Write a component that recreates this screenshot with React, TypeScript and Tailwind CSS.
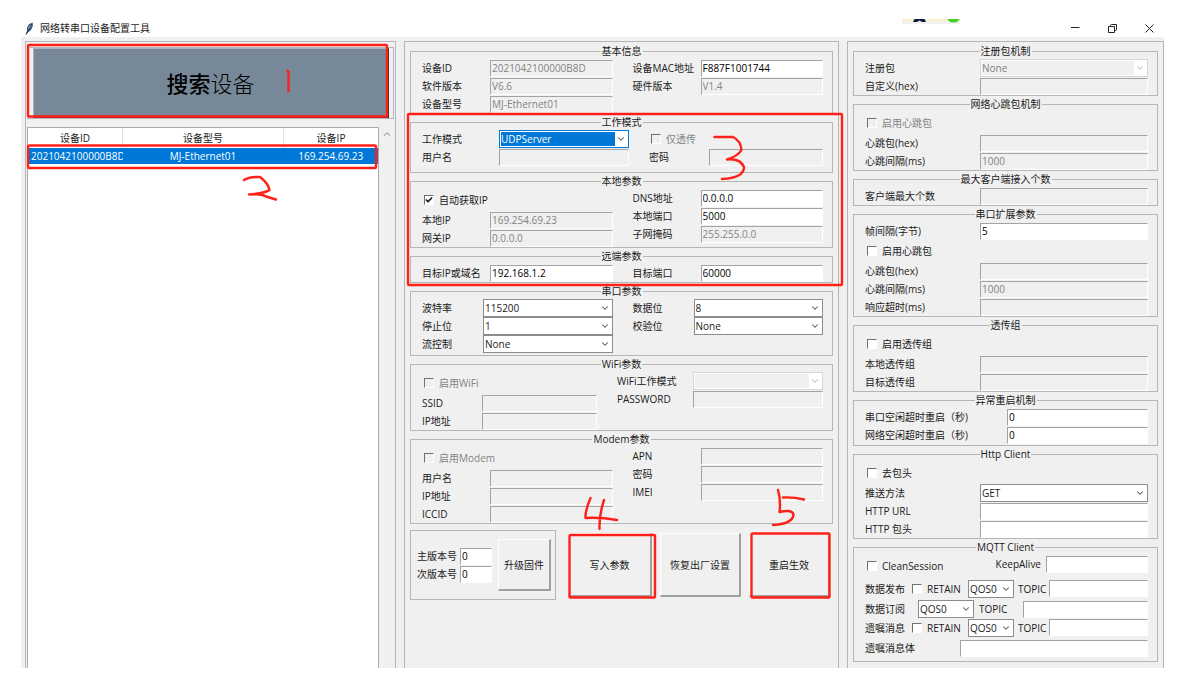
import { ReactNode, useState } from "react";
import { Check, ChevronDown, ChevronUp } from "lucide-react";
import clsx from "clsx";

const sunken = "border border-t-[#a3a3a3] border-l-[#a3a3a3] border-r-white border-b-white";
const raised =
  "bg-[#f0f0f0] border-t border-l border-r-2 border-b-2 border-t-white border-l-white border-r-[#a0a0a0] border-b-[#a0a0a0]";

function Group({ title, className, children }: { title: string; className?: string; children: ReactNode }) {
  return (
    <fieldset className="min-w-0 border border-[#b6b6b6]">
      <legend className="mx-auto px-px leading-4 whitespace-nowrap">{title}</legend>
      <div className={clsx("pl-[11px] pr-[9px]", className)}>{children}</div>
    </fieldset>
  );
}

interface TextBoxProps {
  value?: string;
  disabled?: boolean;
  className?: string;
  label?: string;
}

function TextBox({ value = "", disabled, className = "w-0 flex-1", label }: TextBoxProps) {
  return (
    <input
      type="text"
      defaultValue={value}
      disabled={disabled}
      aria-label={label}
      className={clsx(
        "h-[17px] min-w-0 px-px leading-4 outline-none",
        sunken,
        disabled ? "bg-[#f0f0f0] text-[#838383]" : "bg-white text-black",
        className
      )}
    />
  );
}

interface ComboProps {
  options?: string[];
  disabled?: boolean;
  active?: boolean;
  className?: string;
  label?: string;
}

function Combo({ options = [""], disabled, active, className = "flex-1", label }: ComboProps) {
  return (
    <span
      className={clsx(
        "relative flex h-[18px] min-w-0 border bg-white p-px",
        disabled ? "border-[#d6d6d6]" : active ? "border-[#0078d7]" : "border-[#8c8c8c]",
        className
      )}
    >
      <select
        disabled={disabled}
        aria-label={label}
        className={clsx(
          "mr-3 w-0 min-w-0 flex-1 appearance-none leading-3 outline-none",
          disabled && "bg-[#f0f0f0] text-[#838383] opacity-100",
          active && "bg-[#0078d7] text-white"
        )}
      >
        {options.map((o) => (
          <option key={o}>{o}</option>
        ))}
      </select>
      <ChevronDown
        className={clsx(
          "pointer-events-none absolute top-[3px] right-0.5 size-2.5",
          disabled ? "text-[#bdbdbd]" : "text-[#555]"
        )}
        strokeWidth={2.5}
      />
    </span>
  );
}

interface FieldProps {
  label: string;
  labelWidth?: string;
  children: ReactNode;
}

function Field({ label, labelWidth = "w-[68px]", children }: FieldProps) {
  return (
    <label className="flex h-[18px] min-w-0 items-center">
      <span className={clsx("shrink-0 whitespace-nowrap", labelWidth)}>{label}</span>
      {children}
    </label>
  );
}

interface TickProps {
  label: string;
  checked?: boolean;
  disabled?: boolean;
  className?: string;
}

function Tick({ label, checked = false, disabled, className = "h-[22px]" }: TickProps) {
  const [on, setOn] = useState(checked);
  return (
    <label className={clsx("flex items-center gap-[5px] pl-0.5 whitespace-nowrap", disabled && "text-[#838383]", className)}>
      <span className="relative flex">
        <input
          type="checkbox"
          checked={on}
          disabled={disabled}
          onChange={(e) => setOn(e.target.checked)}
          className={clsx(
            "size-[10px] appearance-none border border-t-[#707070] border-l-[#707070] border-r-white border-b-white",
            disabled ? "bg-[#f0f0f0]" : "bg-white"
          )}
        />
        {on && <Check className="pointer-events-none absolute inset-px size-2" strokeWidth={5} />}
      </span>
      {label}
    </label>
  );
}

function TitleBar() {
  return (
    <header className="flex h-[18px] items-center justify-between pr-2.5 pl-1">
      <div className="flex items-center gap-1.5">
        <svg viewBox="0 0 9 13" className="h-[13px] w-[9px]">
          <path d="M1 12.5 2.2 8.5 2 5.5 4 2.2 7.6.5 7.8 4 6.4 7.3 3.6 10Z" fill="#2c4668" />
          <path d="M3 8 3.4 5 6.6 1.6 6.2 5.2Z" fill="#8fb9e3" />
          <path d="M.8 12.8 6.8 2" stroke="#14202f" strokeWidth=".7" />
        </svg>
        <h1>网络转串口设备配置工具</h1>
      </div>
      <div className="flex items-center gap-7">
        <button aria-label="最小化" className="size-[9px]">
          <svg viewBox="0 0 9 9" className="size-[9px]" stroke="#222" fill="none">
            <path d="M0 3.5H8.5" />
          </svg>
        </button>
        <button aria-label="还原" className="size-[9px]">
          <svg viewBox="0 0 9 9" className="size-[9px]" stroke="#222" fill="none">
            <path d="M.5 2.5H6.5V8.5H.5ZM2.5 2.5V1.5Q2.5.5 3.5.5H8.5V5.5Q8.5 6.5 7.5 6.5H6.5" />
          </svg>
        </button>
        <button aria-label="关闭" className="size-[9px]">
          <svg viewBox="0 0 9 9" className="size-[9px]" stroke="#222" fill="none">
            <path d="M.5.5 8.5 8.5M8.5.5.5 8.5" />
          </svg>
        </button>
      </div>
    </header>
  );
}

function DevicePanel() {
  return (
    <section className="flex min-w-0 flex-col border border-b-0 border-[#b6b6b6] px-px pt-[5px]">
      <div className="border border-[#b6b6b6] pr-1 pl-[5px]">
        <button className="flex h-[70px] w-full items-center justify-center border-t border-r-2 border-b-2 border-l border-t-[#a9b4bf] border-r-[#333] border-b-[#333] border-l-[#a9b4bf] bg-[#778899] text-[22px] text-black">
          <span className="font-medium">搜索</span>
          <span className="font-light">设备</span>
        </button>
      </div>
      <div className="mt-2 flex flex-1">
        <div className="flex-1 border border-b-0 border-[#a5abb5] bg-white">
          <table className="w-full table-fixed">
            <colgroup>
              <col className="w-[27%]" />
              <col className="w-[46%]" />
              <col className="w-[27%]" />
            </colgroup>
            <thead>
              <tr className="h-5">
                <th className="border-r border-[#e2e2e2] font-normal">设备ID</th>
                <th className="border-r border-[#e2e2e2] font-normal">设备型号</th>
                <th className="font-normal">设备IP</th>
              </tr>
            </thead>
            <tbody>
              <tr className="h-4 bg-[#0078d7] text-center leading-4 text-white">
                <td className="overflow-hidden pl-[3px] text-left whitespace-nowrap">2021042100000B8D</td>
                <td>MJ-Ethernet01</td>
                <td>169.254.69.23</td>
              </tr>
            </tbody>
          </table>
        </div>
        <div className="flex w-[15px] justify-center pt-0.5">
          <ChevronUp className="size-2.5 text-[#b0b0b0]" strokeWidth={3} />
        </div>
      </div>
    </section>
  );
}

const twoCols = "grid grid-cols-2 gap-x-5";

function SettingsPanel() {
  return (
    <section className="min-w-0 border border-b-0 border-[#b6b6b6] px-[5px] pt-px">
      <Group title="基本信息" className={twoCols}>
        <div>
          <Field label="设备ID"><TextBox value="2021042100000B8D" disabled /></Field>
          <Field label="软件版本"><TextBox value="V6.6" disabled /></Field>
          <Field label="设备型号"><TextBox value="MJ-Ethernet01" disabled /></Field>
        </div>
        <div>
          <Field label="设备MAC地址"><TextBox value="F887F1001744" /></Field>
          <Field label="硬件版本"><TextBox value="V1.4" disabled /></Field>
        </div>
      </Group>

      <Group title="工作模式" className="grid grid-cols-[207fr_174fr] gap-x-5 pb-1.5">
        <div className="min-w-0">
          <Field label="工作模式" labelWidth="w-[77px]">
            <Combo options={["UDPServer", "UDPClient", "TCPServer", "TCPClient"]} active />
          </Field>
          <Field label="用户名" labelWidth="w-[77px]"><TextBox disabled /></Field>
        </div>
        <div className="min-w-0">
          <Tick label="仅透传" disabled className="h-[18px]" />
          <Field label="密码" labelWidth="w-[60px]"><TextBox disabled /></Field>
        </div>
      </Group>

      <Group title="本地参数" className={twoCols}>
        <div>
          <Tick label="自动获取IP" checked />
          <Field label="本地IP"><TextBox value="169.254.69.23" disabled /></Field>
          <Field label="网关IP"><TextBox value="0.0.0.0" disabled /></Field>
        </div>
        <div>
          <Field label="DNS地址"><TextBox value="0.0.0.0" /></Field>
          <Field label="本地端口"><TextBox value="5000" /></Field>
          <Field label="子网掩码"><TextBox value="255.255.0.0" disabled /></Field>
        </div>
      </Group>

      <Group title="远端参数" className={twoCols}>
        <Field label="目标IP或域名"><TextBox value="192.168.1.2" /></Field>
        <Field label="目标端口"><TextBox value="60000" /></Field>
      </Group>

      <Group title="串口参数" className={clsx(twoCols, "pb-0.5")}>
        <div>
          <Field label="波特率" labelWidth="w-[61px]"><Combo options={["115200", "57600", "9600"]} /></Field>
          <Field label="停止位" labelWidth="w-[61px]"><Combo options={["1", "2"]} /></Field>
          <Field label="流控制" labelWidth="w-[61px]"><Combo options={["None", "RTS/CTS"]} /></Field>
        </div>
        <div>
          <Field label="数据位" labelWidth="w-[61px]"><Combo options={["8", "7"]} /></Field>
          <Field label="校验位" labelWidth="w-[61px]"><Combo options={["None", "Odd", "Even"]} /></Field>
        </div>
      </Group>

      <Group title="WiFi参数" className="grid grid-cols-[175fr_206fr] gap-x-5">
        <div className="min-w-0">
          <Tick label="启用WiFi" disabled />
          <Field label="SSID" labelWidth="w-[60px]"><TextBox disabled /></Field>
          <Field label="IP地址" labelWidth="w-[60px]"><TextBox disabled /></Field>
        </div>
        <div className="min-w-0">
          <Field label="WiFi工作模式" labelWidth="w-[76px]"><Combo disabled /></Field>
          <Field label="PASSWORD" labelWidth="w-[76px]"><TextBox disabled /></Field>
        </div>
      </Group>

      <Group title="Modem参数" className={twoCols}>
        <div>
          <Tick label="启用Modem" disabled />
          <Field label="用户名"><TextBox disabled /></Field>
          <Field label="IP地址"><TextBox disabled /></Field>
          <Field label="ICCID"><TextBox disabled /></Field>
        </div>
        <div>
          <Field label="APN"><TextBox disabled /></Field>
          <Field label="密码"><TextBox disabled /></Field>
          <Field label="IMEI"><TextBox disabled /></Field>
        </div>
      </Group>

      <div className="mt-1.5 flex gap-2 pr-[3px]">
        <div className="mr-1 flex flex-[134] items-center justify-between border border-[#b6b6b6] py-2 pr-1 pl-1.5">
          <div>
            <Field label="主版本号" labelWidth="w-[43px]"><TextBox value="0" className="w-8" /></Field>
            <Field label="次版本号" labelWidth="w-[43px]"><TextBox value="0" className="w-8" /></Field>
          </div>
          <button className={clsx("h-[52px] w-[53px]", raised)}>升级固件</button>
        </div>
        <div className="flex flex-[262] gap-2 pt-[3px] pb-0.5">
          <button className={clsx("h-16 flex-[84]", raised)}>写入参数</button>
          <button className={clsx("h-16 flex-[81]", raised)}>恢复出厂设置</button>
          <button className={clsx("h-16 flex-[81]", raised)}>重启生效</button>
        </div>
      </div>
    </section>
  );
}

const wide = "w-[115px]";
const qos = ["QOS0", "QOS1", "QOS2"];

function PublishRow({ label }: { label: string }) {
  return (
    <div className="flex h-[19px] items-center">
      <span className="w-[45px] shrink-0">{label}</span>
      <Tick label="RETAIN" className="w-[58px] shrink-0" />
      <Combo options={qos} label={`${label} QOS`} className="w-[46px] shrink-0" />
      <label className="flex min-w-0 flex-1 items-center gap-[3px] pl-1">
        TOPIC
        <TextBox />
      </label>
    </div>
  );
}

function ExtraPanel() {
  return (
    <section className="min-w-0 border border-b-0 border-[#b6b6b6] px-[5px] pt-px">
      <Group title="注册包机制">
        <Field label="注册包" labelWidth={wide}><Combo options={["None"]} disabled /></Field>
        <Field label="自定义(hex)" labelWidth={wide}><TextBox disabled /></Field>
      </Group>

      <Group title="网络心跳包机制">
        <Tick label="启用心跳包" disabled />
        <Field label="心跳包(hex)" labelWidth={wide}><TextBox disabled /></Field>
        <Field label="心跳间隔(ms)" labelWidth={wide}><TextBox value="1000" disabled /></Field>
      </Group>

      <Group title="最大客户端接入个数">
        <Field label="客户端最大个数" labelWidth={wide}><TextBox disabled /></Field>
      </Group>

      <Group title="串口扩展参数">
        <Field label="帧间隔(字节)" labelWidth={wide}><TextBox value="5" /></Field>
        <Tick label="启用心跳包" />
        <Field label="心跳包(hex)" labelWidth={wide}><TextBox disabled /></Field>
        <Field label="心跳间隔(ms)" labelWidth={wide}><TextBox value="1000" disabled /></Field>
        <Field label="响应超时(ms)" labelWidth={wide}><TextBox disabled /></Field>
      </Group>

      <Group title="透传组">
        <Tick label="启用透传组" />
        <Field label="本地透传组" labelWidth={wide}><TextBox disabled /></Field>
        <Field label="目标透传组" labelWidth={wide}><TextBox disabled /></Field>
      </Group>

      <Group title="异常重启机制" className="pb-px">
        <Field label="串口空闲超时重启（秒)" labelWidth="w-[142px]"><TextBox value="0" /></Field>
        <Field label="网络空闲超时重启（秒)" labelWidth="w-[142px]"><TextBox value="0" /></Field>
      </Group>

      <Group title="Http Client">
        <Tick label="去包头" />
        <Field label="推送方法" labelWidth={wide}><Combo options={["GET", "POST"]} /></Field>
        <Field label="HTTP URL" labelWidth={wide}><TextBox /></Field>
        <Field label="HTTP 包头" labelWidth={wide}><TextBox /></Field>
      </Group>

      <Group title="MQTT Client" className="pb-1">
        <div className="mb-0.5 flex h-[22px] justify-between">
          <Tick label="CleanSession" />
          <label className="flex h-[18px] items-center gap-[5px]">
            KeepAlive
            <TextBox className="w-[102px]" />
          </label>
        </div>
        <PublishRow label="数据发布" />
        <div className="mt-0.5 flex h-[18px] items-center">
          <span className="w-[53px] shrink-0">数据订阅</span>
          <Combo options={qos} label="数据订阅 QOS" className="w-14 shrink-0" />
          <label className="flex min-w-0 flex-1 items-center gap-4 pl-[5px]">
            TOPIC
            <TextBox />
          </label>
        </div>
        <PublishRow label="遗嘱消息" />
        <div className="pt-0.5">
          <Field label="遗嘱消息体" labelWidth="w-[95px]"><TextBox /></Field>
        </div>
      </Group>
    </section>
  );
}

/* Red pen marks that number the steps, plus the clipped toolbar above the title bar. */
function Marks() {
  return (
    <svg
      viewBox="0 0 1194 673"
      preserveAspectRatio="none"
      className="pointer-events-none absolute inset-0 h-full w-full"
      fill="none"
      stroke="#ff2117"
      strokeWidth="2.4"
      strokeLinecap="round"
      strokeLinejoin="round"
    >
      <g stroke="none">
        <path d="M902 19H960V21.5H902Z" fill="#f7efcf" />
        <path d="M902 22H960V24H902Z" fill="#f1f1f1" />
        <path d="M913 22 914.5 19H924.5L926 22H922L919.5 20.5 917 22Z" fill="#0f1a44" />
        <path d="M947.5 19H959.5Q958 22.5 953.5 22.5T947.5 19Z" fill="#3fd321" />
      </g>
      <rect x="28" y="45" width="359" height="71.5" rx="1" />
      <rect x="28" y="145.5" width="348" height="22.5" rx="1" />
      <rect x="408" y="114" width="434" height="171" rx="1" />
      <rect x="569.5" y="535" width="85.5" height="62.5" rx="1" />
      <rect x="751.5" y="533.5" width="78" height="64" rx="1" />
      <path d="M287.5 71Q289 71 288.500 74V91" />
      <path d="M244 180Q249 176.500 260 177Q268 183 269.500 190Q266 193 249 194.500Q262 193.500 266 196.500L276 199.500" />
      <path d="M714.500 137H733Q741 141 741.500 150Q738 156 727 159.500Q740 158 744 167Q744 178 722 179" />
      <path d="M590.500 498Q585 511 585.500 518Q600 517 617 520M604 500Q599 515 599.500 529" />
      <path d="M778 490Q781 500 779.500 512Q793 509 793.500 515Q792 524 773 525M783 497.500Q794 497 804 499.500" />
    </svg>
  );
}

export default function App() {
  return (
    <div className="relative flex min-h-screen flex-col bg-white pt-[19px] pr-[30px] pb-[5px] pl-[21px] font-['Open_Sans','Noto_Sans_CJK_SC',sans-serif] text-[10px] leading-4 text-[#1a1a1a]">
      <TitleBar />
      <main className="grid flex-1 grid-cols-[371fr_435fr_317fr] gap-x-2 bg-[#f0f0f0] pt-1 pl-1">
        <DevicePanel />
        <SettingsPanel />
        <ExtraPanel />
      </main>
      <Marks />
    </div>
  );
}
